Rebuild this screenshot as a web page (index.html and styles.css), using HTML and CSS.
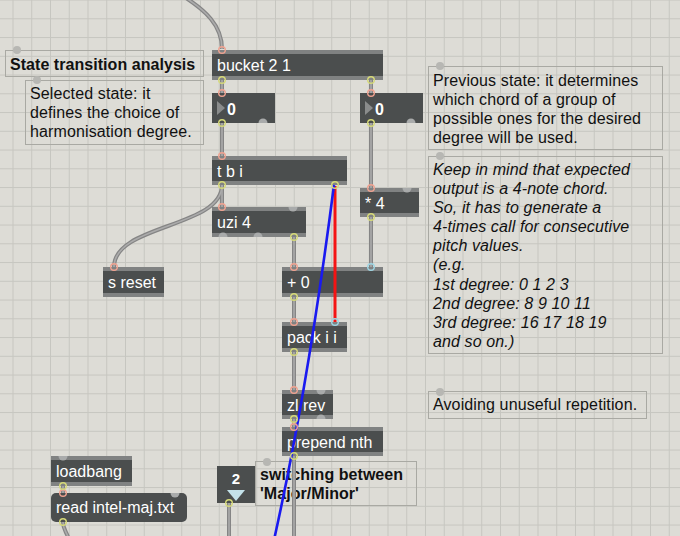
FILE: index.html
```html
<!DOCTYPE html>
<html>
<head>
<meta charset="utf-8">
<link rel="stylesheet" href="styles.css">
</head>
<body>
<div class="patch">
  <div class="cmt bold c-title">State transition analysis</div>
  <div class="cmt c-selected">Selected state: it<br>defines the choice of<br>harmonisation degree.</div>
  <div class="cmt c-prev">Previous state: it determines<br>which chord of a group of<br>possible ones for the desired<br>degree will be used.</div>
  <div class="cmt italic c-keep">Keep in mind that expected<br>output is a 4-note chord.<br>So, it has to generate a<br>4-times call for consecutive<br>pitch values.<br>(e.g.<br>1st degree: 0 1 2 3<br>2nd degree: 8 9 10 11<br>3rd degree: 16 17 18 19<br>and so on.)</div>
  <div class="cmt c-avoid">Avoiding unuseful repetition.</div>
  <div class="cmt bold c-switch">switching between<br>'Major/Minor'</div>

  <div class="obj o-bucket">bucket 2 1</div>
  <div class="num n-left"><span class="tri"></span>0</div>
  <div class="num n-right"><span class="tri"></span>0</div>
  <div class="obj o-tbi">t b i</div>
  <div class="obj o-uzi">uzi 4</div>
  <div class="obj o-mul">* 4</div>
  <div class="obj o-sreset">s reset</div>
  <div class="obj o-plus">+ 0</div>
  <div class="obj o-pack">pack i i</div>
  <div class="obj o-zl">zl rev</div>
  <div class="obj o-prepend">prepend nth</div>
  <div class="obj o-loadbang">loadbang</div>
  <div class="msg m-read">read intel-maj.txt</div>
  <div class="tab n-two"><span class="tab-val">2</span><span class="tab-arrow"></span></div>

  <svg class="wires" viewBox="0 0 680 536" width="680" height="536">
    <g class="cord">
      <path d="M183 -4 C205 10 222 25 222 49"/>
      <path d="M222 80 V93"/>
      <path d="M371 80 V93"/>
      <path d="M222 123 V156"/>
      <path d="M371 123 V188"/>
      <path d="M222 185 V207"/>
      <path d="M222 185 C222 228 114 224 114 267"/>
      <path d="M294 237 V267"/>
      <path d="M371 217 V267"/>
      <path d="M294 297 V322"/>
      <path d="M294 352 V390"/>
      <path d="M294 419 V427"/>
      <path d="M294 456 V540"/>
      <path d="M63 486 V493"/>
      <path d="M63 522 C63 530 67 532 69 540"/>
      <path d="M229 503 V540"/>
    </g>
    <g class="cord-in">
      <path d="M183 -4 C205 10 222 25 222 49"/>
      <path d="M222 80 V93"/>
      <path d="M371 80 V93"/>
      <path d="M222 123 V156"/>
      <path d="M371 123 V188"/>
      <path d="M222 185 V207"/>
      <path d="M222 185 C222 228 114 224 114 267"/>
      <path d="M294 237 V267"/>
      <path d="M371 217 V267"/>
      <path d="M294 297 V322"/>
      <path d="M294 352 V390"/>
      <path d="M294 419 V427"/>
      <path d="M294 456 V540"/>
      <path d="M63 486 V493"/>
      <path d="M63 522 C63 530 67 532 69 540"/>
      <path d="M229 503 V540"/>
    </g>
    <path class="red" d="M335 186 V322"/>
    <path class="blue" d="M334 185 Q308 387.5 274 540"/>

    <g class="bump">
      <path d="M288.5 207 A4.5 4.5 0 0 0 297.5 207 Z"/>
      <path d="M402.5 188 A4.5 4.5 0 0 0 411.5 188 Z"/>
      <path d="M316.5 390 A4.5 4.5 0 0 0 325.5 390 Z"/>
      <path d="M58.5 456 A4.5 4.5 0 0 0 67.5 456 Z"/>
      <path d="M170.5 493 A4.5 4.5 0 0 0 179.5 493 Z"/>
      <path d="M218.5 237 A4.5 4.5 0 0 1 227.5 237 Z"/>
      <path d="M253.5 237 A4.5 4.5 0 0 1 262.5 237 Z"/>
      <path d="M258.5 123 A4.5 4.5 0 0 1 267.5 123 Z"/>
      <path d="M406.5 123 A4.5 4.5 0 0 1 415.5 123 Z"/>
      <path d="M316.5 419 A4.5 4.5 0 0 1 325.5 419 Z"/>
    </g>
    <g class="cdot">
      <circle cx="17" cy="50" r="4"/>
      <circle cx="37" cy="80" r="4"/>
      <circle cx="440" cy="66" r="4"/>
      <circle cx="440" cy="156" r="4"/>
      <circle cx="440" cy="392" r="4"/>
      <circle cx="267" cy="462" r="4"/>
    </g>
    <g class="inlet">
      <circle cx="222" cy="50" r="3.3"/>
      <circle cx="222" cy="93" r="3.3"/>
      <circle cx="371" cy="93" r="3.3"/>
      <circle cx="222" cy="156" r="3.3"/>
      <circle cx="222" cy="207" r="3.3"/>
      <circle cx="114" cy="267" r="3.3"/>
      <circle cx="294" cy="267" r="3.3"/>
      <circle cx="371" cy="188" r="3.3"/>
      <circle cx="294" cy="322" r="3.3"/>
      <circle cx="294" cy="390" r="3.3"/>
      <circle cx="294" cy="427" r="3.3"/>
      <circle cx="63" cy="493" r="3.3"/>
    </g>
    <g class="cold">
      <circle cx="371" cy="267" r="3.3"/>
      <circle cx="335" cy="322" r="3.3"/>
    </g>
    <g class="outlet">
      <circle cx="222" cy="80" r="3.3"/>
      <circle cx="371" cy="80" r="3.3"/>
      <circle cx="222" cy="123" r="3.3"/>
      <circle cx="371" cy="123" r="3.3"/>
      <circle cx="222" cy="185" r="3.3"/>
      <circle cx="335" cy="185" r="3.3"/>
      <circle cx="294" cy="237" r="3.3"/>
      <circle cx="371" cy="217" r="3.3"/>
      <circle cx="294" cy="297" r="3.3"/>
      <circle cx="294" cy="352" r="3.3"/>
      <circle cx="294" cy="419" r="3.3"/>
      <circle cx="294" cy="456" r="3.3"/>
      <circle cx="63" cy="486" r="3.3"/>
      <circle cx="63" cy="522" r="3.3"/>
      <circle cx="229" cy="503" r="3.3"/>
    </g>
  </svg>
</div>
</body>
</html>
```
FILE: styles.css
```css
html, body {
  margin: 0;
  padding: 0;
}

body {
  width: 680px;
  height: 536px;
  overflow: hidden;
  background: #dddcd6;
}

.patch {
  position: relative;
  width: 680px;
  height: 536px;
  overflow: hidden;
  background-color: #dddcd6;
  background-image:
    linear-gradient(to right, #c6c6c0 1px, transparent 1px),
    linear-gradient(to bottom, #c6c6c0 1px, transparent 1px);
  background-size: 18.75px 18.75px;
  background-position: 12.5px 18.3px;
  font-family: "Liberation Sans", Arial, sans-serif;
}

/* comments */
.cmt {
  position: absolute;
  box-sizing: border-box;
  border: 1px solid #a9a9a3;
  padding: 3px 4px;
  font-size: 16px;
  line-height: 19.1px;
  letter-spacing: 0.12px;
  color: #111;
  white-space: nowrap;
}

.cmt.bold {
  font-weight: bold;
  letter-spacing: 0.05px;
}

.cmt.italic {
  font-style: italic;
}

.c-title { left: 5px; top: 50px; width: 199px; height: 27px; padding-top: 4px; }
.c-selected { left: 25px; top: 80px; width: 179px; height: 65px; }
.c-prev { left: 428px; top: 66px; width: 235px; height: 84px; padding-top: 4px; }
.c-keep { left: 428px; top: 156px; width: 235px; height: 198px; }
.c-avoid { left: 428px; top: 391px; width: 219px; height: 28px; }
.c-switch { left: 255px; top: 461px; width: 162px; height: 45px; }

/* objects */
.obj, .num, .msg, .tab {
  position: absolute;
  box-sizing: border-box;
  background: #4b4e4e;
  color: #fff;
  font-size: 16px;
  line-height: 19px;
  white-space: nowrap;
}

.obj {
  height: 29px;
  border-top: 4px solid #808282;
  border-bottom: 4px solid #808282;
  padding: 2px 5px 0;
}

.o-bucket { left: 212px; top: 50px; width: 171px; height: 30px; }
.o-tbi { left: 212px; top: 156px; width: 135px; }
.o-uzi { left: 212px; top: 207px; width: 94px; height: 30px; }
.o-mul { left: 360px; top: 188px; width: 59px; }
.o-sreset { left: 103px; top: 267px; width: 61px; height: 30px; }
.o-plus { left: 282px; top: 267px; width: 101px; height: 30px; }
.o-pack { left: 282px; top: 322px; width: 65px; height: 30px; }
.o-zl { left: 282px; top: 390px; width: 51px; }
.o-prepend { left: 282px; top: 427px; width: 101px; }
.o-loadbang { left: 51px; top: 456px; width: 81px; height: 30px; }

.num {
  height: 30px;
  padding: 7px 0 0 15px;
  font-weight: bold;
}

.n-left { left: 212px; top: 93px; width: 63px; }
.n-right { left: 360px; top: 93px; width: 63px; }

.tri {
  position: absolute;
  left: 5px;
  top: 8px;
  width: 0;
  height: 0;
  border-top: 7px solid transparent;
  border-bottom: 7px solid transparent;
  border-left: 8px solid #8a8c8c;
}

.msg {
  height: 29px;
  border-radius: 5px;
  padding: 5px 5px 0;
}

.m-read { left: 51px; top: 493px; width: 136px; }

.tab {
  display: flex;
  flex-direction: column;
  align-items: center;
  padding-top: 6px;
  gap: 4px;
}

.n-two { left: 217px; top: 466px; width: 38px; height: 37px; }

.tab-val {
  font-weight: bold;
  font-size: 15px;
  line-height: 14px;
}

.tab-arrow {
  width: 0;
  height: 0;
  border-left: 9px solid transparent;
  border-right: 9px solid transparent;
  border-top: 11px solid #c4e2ea;
}

/* wires overlay */
.wires {
  position: absolute;
  left: 0;
  top: 0;
  pointer-events: none;
}

.cord path {
  fill: none;
  stroke: #858585;
  stroke-width: 4;
}

.cord-in path {
  fill: none;
  stroke: #ababab;
  stroke-width: 1.6;
}

.red {
  fill: none;
  stroke: #f41414;
  stroke-width: 3;
}

.blue {
  fill: none;
  stroke: #1a1af0;
  stroke-width: 2.6;
  stroke-linejoin: round;
}

.bump path {
  fill: #a9abab;
}

.cdot circle {
  fill: #b7b7b3;
}

.inlet circle {
  fill: none;
  stroke: #f0a290;
  stroke-width: 1.4;
}

.cold circle {
  fill: none;
  stroke: #9ed6e4;
  stroke-width: 1.4;
}

.outlet circle {
  fill: none;
  stroke: #d6da78;
  stroke-width: 1.4;
}
```
